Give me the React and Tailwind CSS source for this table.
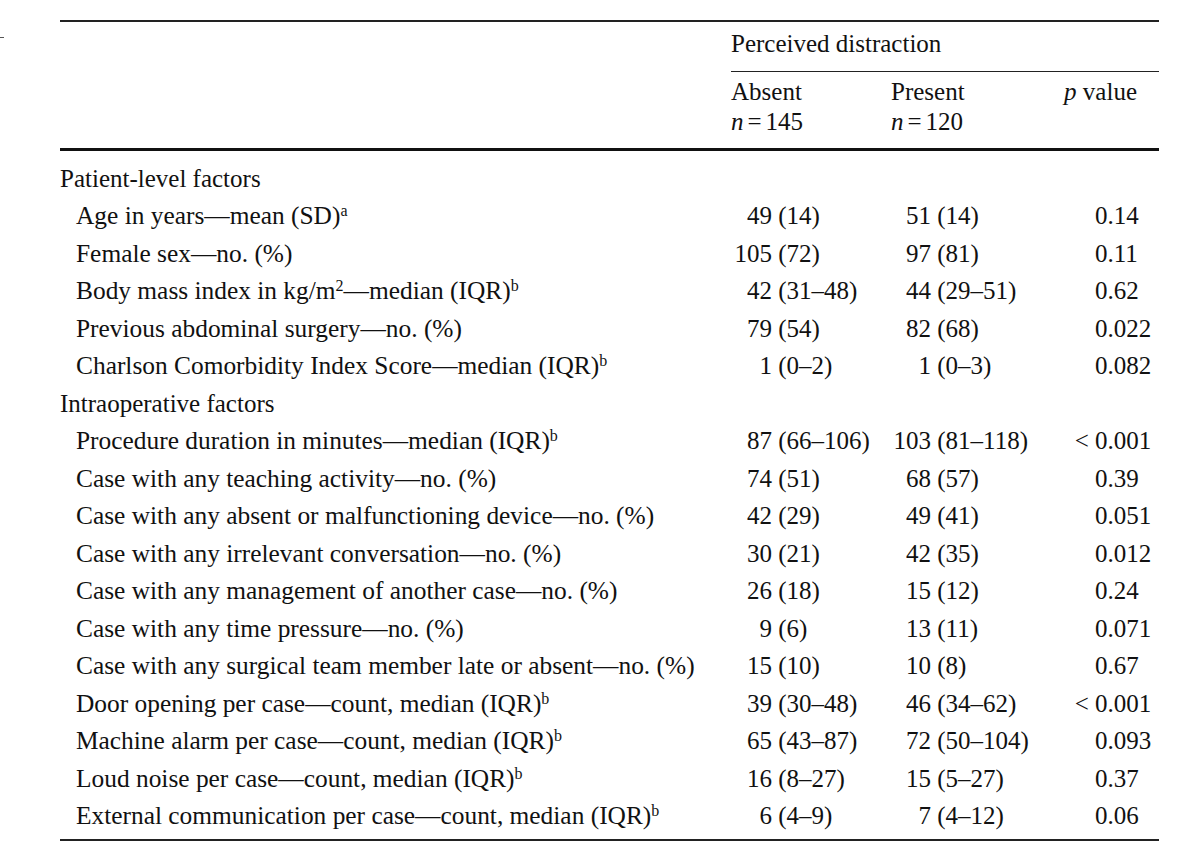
import React from "react";

const Sup = ({ children }) => <sup className="text-[16px]">{children}</sup>;

const rows = [
  { heading: "Patient-level factors" },
  { label: <>Age in years—mean (SD)<Sup>a</Sup></>, absent: ["49", "(14)"], present: ["51", "(14)"], p: ["", "0.14"] },
  { label: "Female sex—no. (%)", absent: ["105", "(72)"], present: ["97", "(81)"], p: ["", "0.11"] },
  { label: <>Body mass index in kg/m<Sup>2</Sup>—median (IQR)<Sup>b</Sup></>, absent: ["42", "(31–48)"], present: ["44", "(29–51)"], p: ["", "0.62"] },
  { label: "Previous abdominal surgery—no. (%)", absent: ["79", "(54)"], present: ["82", "(68)"], p: ["", "0.022"] },
  { label: <>Charlson Comorbidity Index Score—median (IQR)<Sup>b</Sup></>, absent: ["1", "(0–2)"], present: ["1", "(0–3)"], p: ["", "0.082"] },
  { heading: "Intraoperative factors" },
  { label: <>Procedure duration in minutes—median (IQR)<Sup>b</Sup></>, absent: ["87", "(66–106)"], present: ["103", "(81–118)"], p: ["<\u00a0", "0.001"] },
  { label: "Case with any teaching activity—no. (%)", absent: ["74", "(51)"], present: ["68", "(57)"], p: ["", "0.39"] },
  { label: "Case with any absent or malfunctioning device—no. (%)", absent: ["42", "(29)"], present: ["49", "(41)"], p: ["", "0.051"] },
  { label: "Case with any irrelevant conversation—no. (%)", absent: ["30", "(21)"], present: ["42", "(35)"], p: ["", "0.012"] },
  { label: "Case with any management of another case—no. (%)", absent: ["26", "(18)"], present: ["15", "(12)"], p: ["", "0.24"] },
  { label: "Case with any time pressure—no. (%)", absent: ["9", "(6)"], present: ["13", "(11)"], p: ["", "0.071"] },
  { label: "Case with any surgical team member late or absent—no. (%)", absent: ["15", "(10)"], present: ["10", "(8)"], p: ["", "0.67"] },
  { label: <>Door opening per case—count, median (IQR)<Sup>b</Sup></>, absent: ["39", "(30–48)"], present: ["46", "(34–62)"], p: ["<\u00a0", "0.001"] },
  { label: <>Machine alarm per case—count, median (IQR)<Sup>b</Sup></>, absent: ["65", "(43–87)"], present: ["72", "(50–104)"], p: ["", "0.093"] },
  { label: <>Loud noise per case—count, median (IQR)<Sup>b</Sup></>, absent: ["16", "(8–27)"], present: ["15", "(5–27)"], p: ["", "0.37"] },
  { label: <>External communication per case—count, median (IQR)<Sup>b</Sup></>, absent: ["6", "(4–9)"], present: ["7", "(4–12)"], p: ["", "0.06"] },
];

function Value({ pair, numWidth }) {
  return (
    <div className="flex whitespace-nowrap">
      <span className={`${numWidth} text-right`}>{pair[0]}</span>
      <span>&nbsp;{pair[1]}</span>
    </div>
  );
}

export default function App() {
  return (
    <div className="min-h-screen bg-white text-[#111] font-['Liberation_Serif','Times_New_Roman',serif] text-[25px]">
      <div className="flex">
        {/* left gutter with scan mark */}
        <div className="w-[60px] shrink-0">
          <div className="mt-[37px] w-[4px] h-[1px] bg-[#555]" />
        </div>

        <div className="w-[1099px] shrink-0 pt-[20px]">
          <div className="h-[1.5px] bg-[#222]" />

          {/* header */}
          <div className="ml-[671px] mt-[7px] leading-[30px]">Perceived distraction</div>
          <div className="ml-[671px] mt-[12px] h-[1.5px] bg-[#222]" />
          <div className="grid grid-cols-[671px_160px_169px_99px] mt-[5px] leading-[30px]">
            <div />
            <div>
              <div>Absent</div>
              <div>
                <i>n</i>
                <span className="mx-[4px]">=</span>145
              </div>
            </div>
            <div>
              <div>Present</div>
              <div>
                <i>n</i>
                <span className="mx-[4px]">=</span>120
              </div>
            </div>
            <div className="text-right pr-[22px]">
              <i>p</i> value
            </div>
          </div>
          <div className="mt-[11px] h-[2.5px] bg-[#111]" />

          {/* body */}
          <div className="mt-[9px] leading-[37.5px]">
            {rows.map((row, i) =>
              row.heading ? (
                <div key={i} className="h-[37.5px]">{row.heading}</div>
              ) : (
                <div key={i} className="grid grid-cols-[671px_160px_169px_99px] h-[37.5px]">
                  <div className="pl-[16px] whitespace-nowrap text-[25.4px]">{row.label}</div>
                  <Value pair={row.absent} numWidth="w-[41px]" />
                  <Value pair={row.present} numWidth="w-[40px]" />
                  <div className="flex whitespace-nowrap">
                    <span className="w-[35px] text-right">{row.p[0]}</span>
                    <span>{row.p[1]}</span>
                  </div>
                </div>
              )
            )}
          </div>
          <div className="mt-[4px] h-[2px] bg-[#222]" />
        </div>
      </div>
    </div>
  );
}
